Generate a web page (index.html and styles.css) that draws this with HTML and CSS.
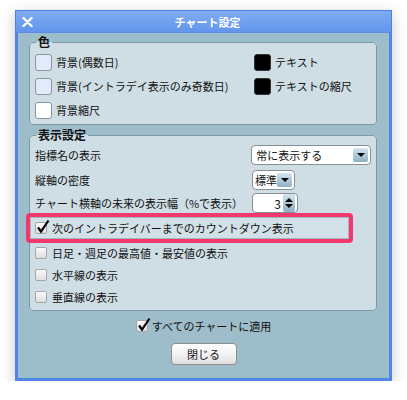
FILE: index.html
```html
<!DOCTYPE html>
<html>
  <head>
    <meta charset="utf-8">
    <link rel="stylesheet" href="styles.css">
  </head>
  <body>
    <div class="window">
      <div class="titlebar">
        <span class="close">
          <svg width="11" height="10" viewBox="0 0 11 10"><path d="M1.5 1 L9.5 9 M9.5 1 L1.5 9" stroke="#fff" stroke-width="2.4" stroke-linecap="round"/></svg>
        </span>
        <span class="title">チャート設定</span>
      </div>
      <div class="body">
        <fieldset class="group colors">
          <legend>色</legend>
          <div class="color-grid">
            <div class="color-row"><span class="swatch swatch-light"></span>背景(偶数日)</div>
            <div class="color-row"><span class="swatch swatch-black"></span>テキスト</div>
            <div class="color-row"><span class="swatch swatch-light"></span>背景(イントラデイ表示のみ奇数日)</div>
            <div class="color-row"><span class="swatch swatch-black"></span>テキストの縮尺</div>
            <div class="color-row"><span class="swatch swatch-white"></span>背景縮尺</div>
          </div>
        </fieldset>

        <fieldset class="group display">
          <legend>表示設定</legend>
          <div class="setting row-a">
            <span class="setting-label">指標名の表示</span>
            <div class="select select-wide">常に表示する<span class="arrow"><i class="tri-down"></i></span></div>
          </div>
          <div class="setting row-b">
            <span class="setting-label">縦軸の密度</span>
            <div class="select select-short">標準<span class="arrow"><i class="tri-down"></i></span></div>
          </div>
          <div class="setting row-c">
            <span class="setting-label">チャート横軸の未来の表示幅（%で表示）</span>
            <div class="spin"><span class="spin-value">3</span><span class="spin-btn"><i class="tri-up"></i><i class="tri-down"></i></span></div>
          </div>
          <div class="check-row highlight">
            <div class="highlight-inner">
              <span class="checkbox checked"><svg width="14" height="15" viewBox="0 0 14 15"><path d="M2 8.5 L5 12.5 L12.5 1.5" fill="none" stroke="#000" stroke-width="2.2"/></svg></span>
              次のイントラデイバーまでのカウントダウン表示
            </div>
          </div>
          <div class="check-row"><span class="checkbox"></span>日足・週足の最高値・最安値の表示</div>
          <div class="check-row"><span class="checkbox"></span>水平線の表示</div>
          <div class="check-row"><span class="checkbox"></span>垂直線の表示</div>
        </fieldset>

        <div class="footer">
          <div class="apply-all">
            <span class="checkbox checked"><svg width="14" height="15" viewBox="0 0 14 15"><path d="M2 8.5 L5 12.5 L12.5 1.5" fill="none" stroke="#000" stroke-width="2.2"/></svg></span>
            すべてのチャートに適用
          </div>
          <button class="close-btn" type="button">閉じる</button>
        </div>
      </div>
    </div>
  </body>
</html>
```

FILE: styles.css
```css
* {
  box-sizing: border-box;
}
body {
  margin: 0;
  background: #fff;
  font-family: "Noto Sans CJK JP", "Noto Sans", sans-serif;
  font-size: 11px;
  color: #111;
}

.window {
  margin: 10px 0 0 15px;
  width: 377px;
  box-shadow: 0 4px 14px rgba(0, 0, 0, 0.22);
}

.titlebar {
  height: 22px;
  display: flex;
  align-items: center;
  background: linear-gradient(#80abf3, #6296ec);
  border: 1px solid #4a80e2;
  border-bottom: none;
  color: #fff;
}
.close {
  display: flex;
  margin-left: 6px;
}
.title {
  flex: 1;
  text-align: center;
  font-weight: bold;
  font-size: 11px;
  margin-right: 17px;
  margin-left: 8px;
}

.body {
  background: #9ebdcb;
  border: 3px solid #4f86e6;
  border-top: 1px solid #5b8ee8;
  padding-bottom: 13px;
}

.group {
  margin: 1px 0 0 11px;
  width: 348px;
  padding: 0 5px 2px 5px;
  border: 1px solid #7f98a5;
  border-radius: 4px;
  background: #cfdee5;
  min-inline-size: 0;
}
.group legend {
  margin-left: 1px;
  padding: 0 2px;
  font-size: 12px;
  font-weight: bold;
  line-height: 16px;
}
.display {
  margin-top: 2px;
}

.color-grid {
  display: grid;
  grid-template-columns: 219px 1fr;
}
.color-row {
  height: 24px;
  display: flex;
  align-items: center;
  white-space: nowrap;
}
.swatch {
  width: 17px;
  height: 17px;
  border-radius: 3px;
  border: 1px solid #8795a0;
  margin-right: 4px;
  flex-shrink: 0;
}
.swatch-light {
  background: #e3eafb;
}
.swatch-white {
  background: #fff;
}
.swatch-black {
  background: #000;
  border-color: #333;
}

.setting {
  display: flex;
  align-items: center;
}
.row-a {
  height: 24px;
}
.row-b {
  height: 26px;
}
.row-c {
  height: 20px;
}
.setting-label {
  width: 217px;
  white-space: nowrap;
}

.select {
  height: 20px;
  background: #fff;
  border: 1px solid #8a8f94;
  border-radius: 4px;
  display: flex;
  align-items: center;
  justify-content: space-between;
  padding: 0 2px 0 4px;
  font-size: 11px;
  white-space: nowrap;
}
.select-wide {
  width: 120px;
}
.select-short {
  width: 43px;
  padding-left: 2px;
}
.arrow,
.spin-btn {
  width: 15px;
  height: 14px;
  border-radius: 2px;
  background: linear-gradient(#d3e4ee, #8eb0c3);
  display: flex;
  align-items: center;
  justify-content: center;
  flex-shrink: 0;
}
.tri-down,
.tri-up {
  display: block;
  width: 0;
  height: 0;
  border-left: 4px solid transparent;
  border-right: 4px solid transparent;
}
.tri-down {
  border-top: 4px solid #000;
}
.tri-up {
  border-bottom: 4px solid #000;
}

.spin {
  width: 46px;
  height: 20px;
  display: flex;
  align-items: center;
  justify-content: flex-end;
  background: #fff;
  border: 1px solid #8a8f94;
  border-radius: 4px;
  padding-right: 2px;
  font-size: 12px;
}
.spin-value {
  margin-right: 2px;
}
.spin-btn {
  width: 12px;
  height: 18px;
  flex-direction: column;
  gap: 2px;
}

.check-row {
  height: 22px;
  display: flex;
  align-items: center;
  white-space: nowrap;
}
.highlight {
  height: 30px;
  margin: 0 0 -1px -9px;
  width: 327px;
  border: 4px solid #f2386f;
  border-radius: 4px;
}
.highlight-inner {
  height: 100%;
  width: 100%;
  display: flex;
  align-items: center;
  border: 1px solid #a4b7c1;
  padding-left: 4px;
  background: #d2e0e7;
}

.checkbox {
  width: 12px;
  height: 12px;
  border: 1px solid #a3a7aa;
  border-radius: 2px;
  background: linear-gradient(#fafafa, #dedede);
  margin-right: 5px;
  position: relative;
  flex-shrink: 0;
}
.checkbox svg {
  position: absolute;
  left: 0;
  top: -4px;
}

.footer {
  display: flex;
  flex-direction: column;
  align-items: center;
}
.apply-all {
  margin-top: 8px;
  height: 14px;
  display: flex;
  align-items: center;
  font-size: 11px;
}
.apply-all .checkbox {
  margin-right: 4px;
}
.close-btn {
  margin-top: 10px;
  width: 66px;
  height: 22px;
  border: 1px solid #8e8e8e;
  border-radius: 4px;
  background: linear-gradient(#ffffff, #f3f3f3 50%, #dedede);
  font-family: inherit;
  font-size: 11px;
  color: #111;
  padding: 0;
}
```
